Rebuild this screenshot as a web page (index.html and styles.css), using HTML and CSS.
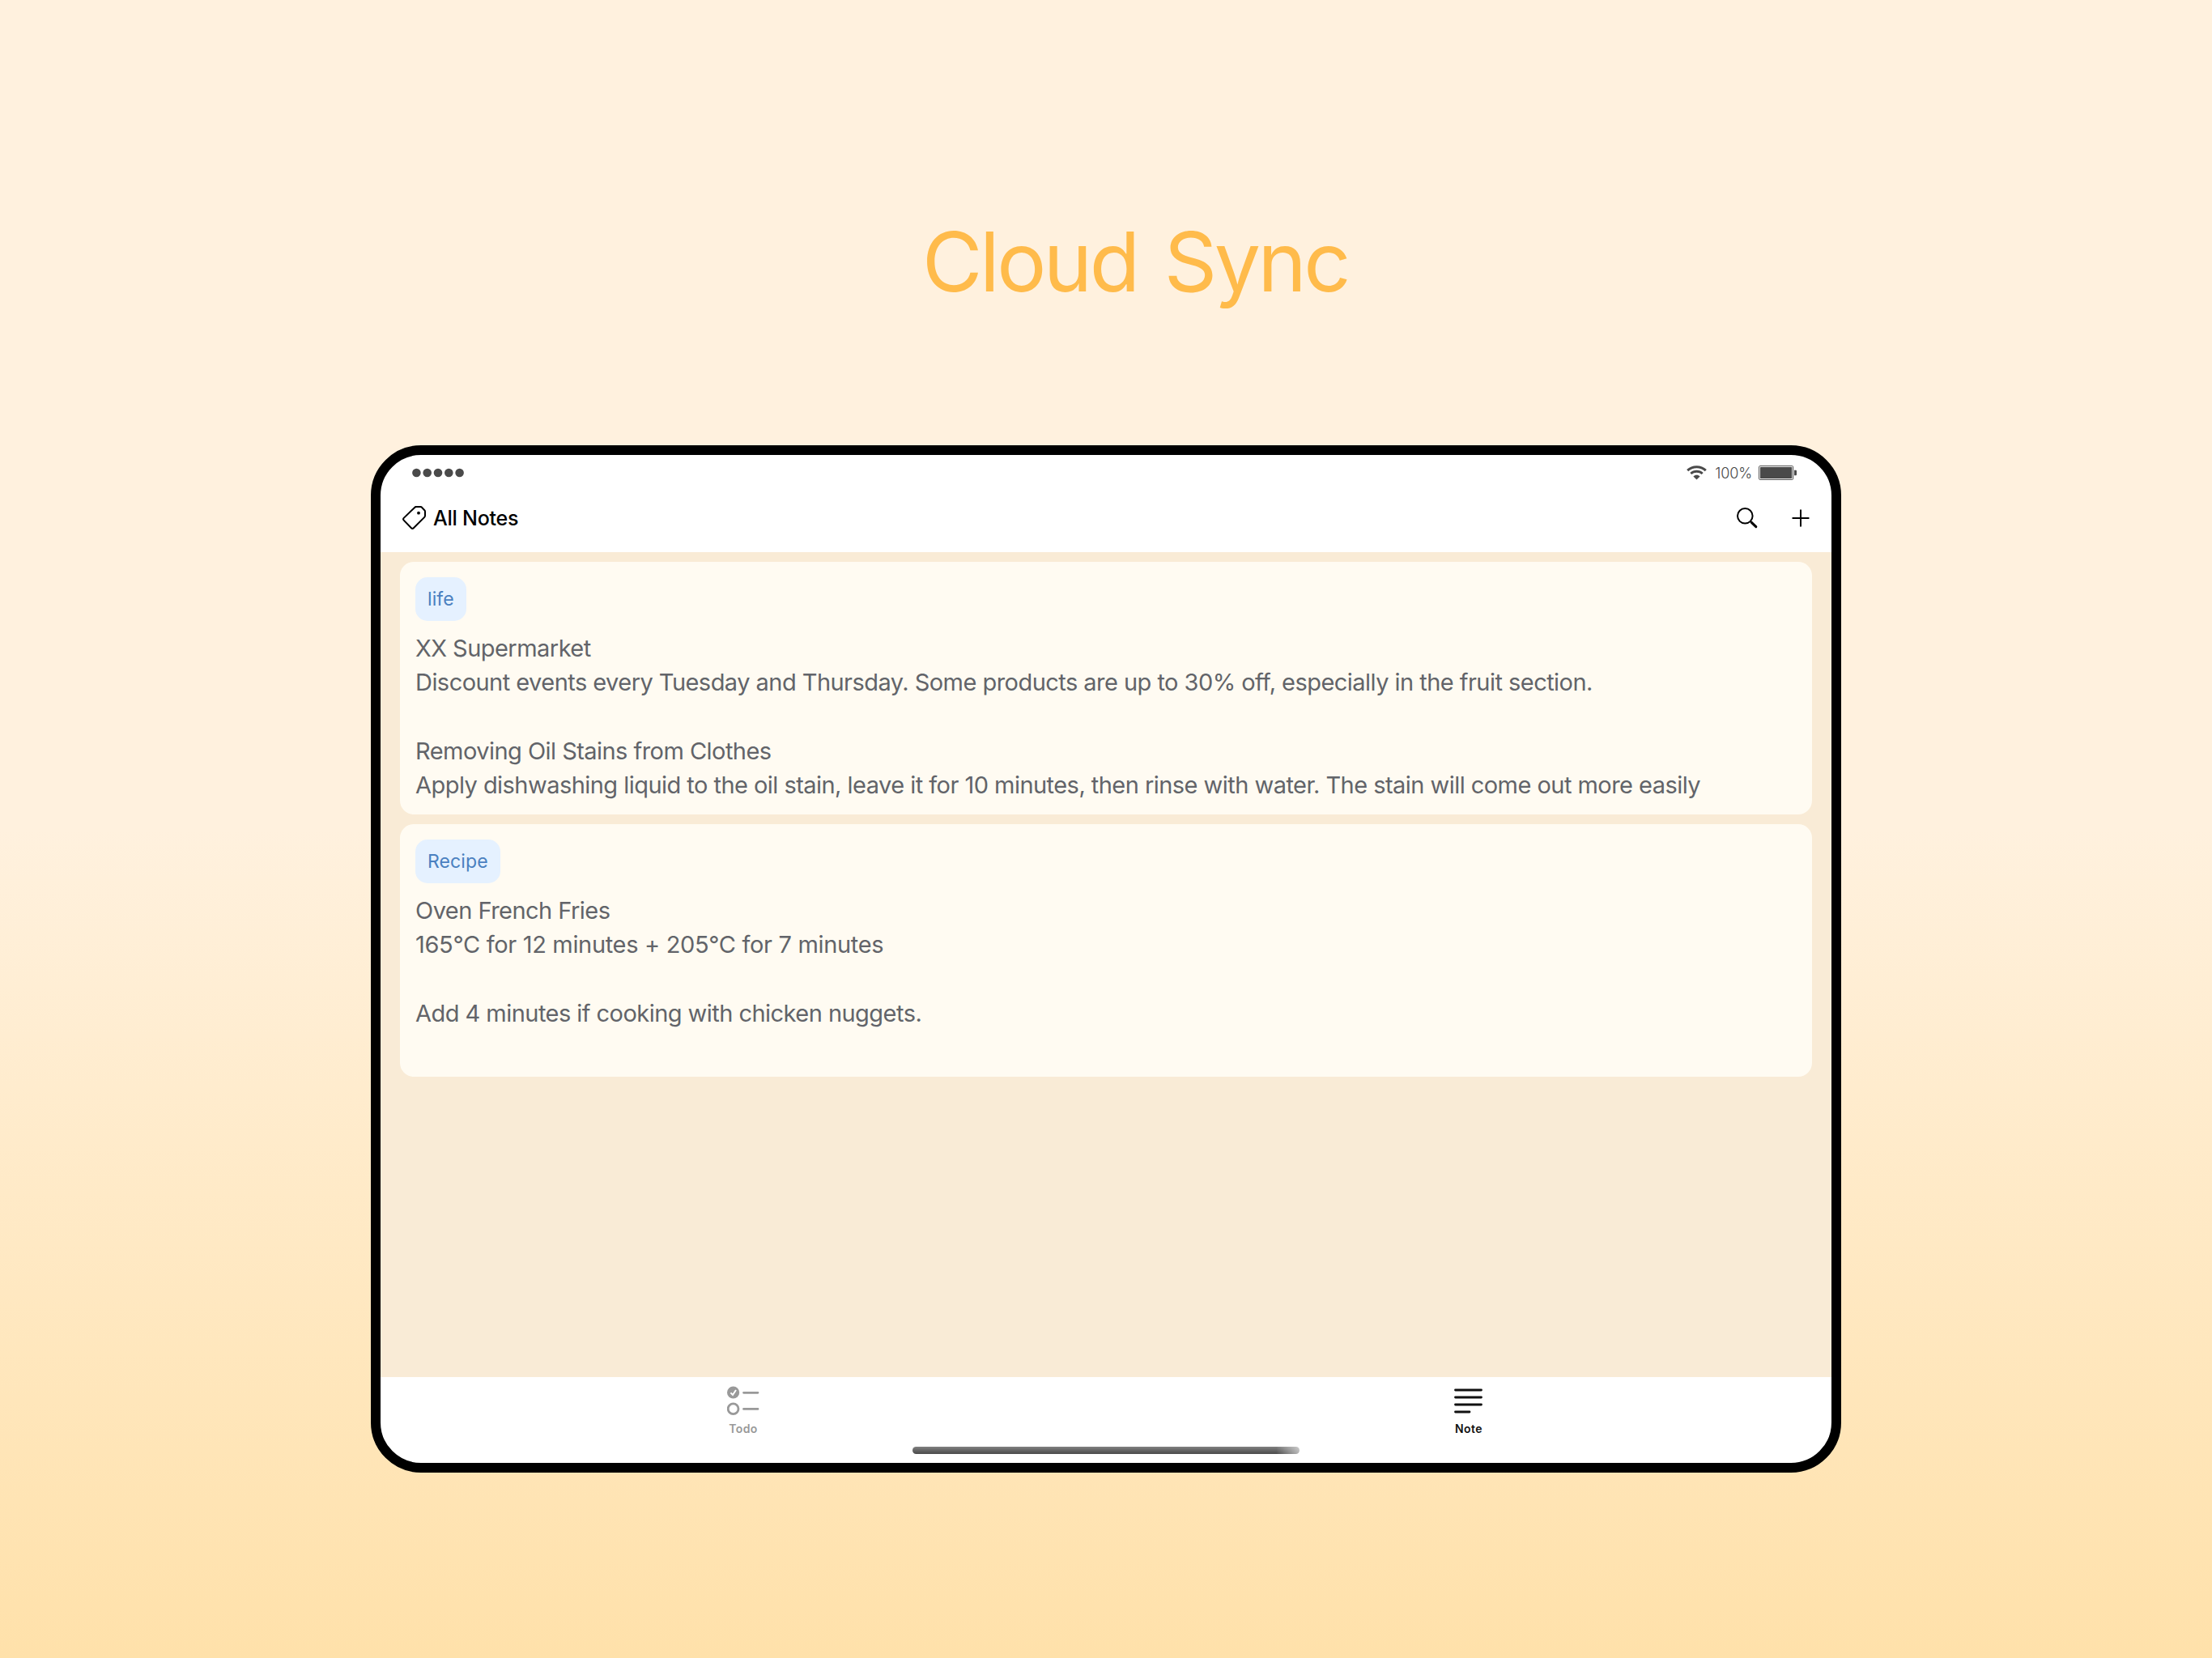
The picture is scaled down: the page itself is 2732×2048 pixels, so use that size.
FILE: index.html
```html
<!DOCTYPE html>
<html lang="en">

<head>
    <meta charset="UTF-8">
    <meta name="viewport" content="width=device-width, initial-scale=1.0">
    <title>Cloud Sync</title>
    <link rel="stylesheet" href="styles.css">
</head>

<body>
    <h1 class="title">Cloud Sync</h1>
    <div class="device">
        <div class="status-bar">
            <svg class="dots" width="64" height="12" viewBox="0 0 64 12">
                <circle cx="5.4" cy="6" r="5.3" />
                <circle cx="18.7" cy="6" r="5.3" />
                <circle cx="32" cy="6" r="5.3" />
                <circle cx="45.3" cy="6" r="5.3" />
                <circle cx="58.6" cy="6" r="5.3" />
            </svg>
            <div class="status-right">
                <svg class="wifi" width="25" height="18" viewBox="0 0 25 18">
                    <path d="M1.2 6.2C7.5 0.2 17.5 0.2 23.8 6.2" />
                    <path d="M5.3 10C9.3 6.4 15.7 6.4 19.7 10" />
                    <path class="fill" d="M8.4 13.4C10.6 11.2 14.4 11.2 16.6 13.4L12.5 17.4Z" />
                </svg>
                <span class="percent">100%</span>
                <svg class="battery" width="48" height="18" viewBox="0 0 48 18">
                    <rect class="shell" x="0.6" y="0.6" width="42" height="16.8" rx="1" />
                    <rect x="2" y="2" width="39.2" height="14" rx="0.6" />
                    <path d="M44 5.8H46Q47 5.8 47 7V11Q47 12.2 46 12.2H44Z" />
                </svg>
            </div>
        </div>
        <div class="header">
            <div class="folder">
                <svg width="30" height="30" viewBox="0 0 30 30">
                    <path d="M15.3 1.7Q16.2 0.9 17.4 0.9H22Q23 0.9 23.8 1.6L27.3 5.2Q28 5.9 28 7V12Q28 13 27.2 13.9L13.8 27.2Q12.4 28.6 11 27.2L1.7 17.6Q0.4 16.2 1.7 14.9Z" />
                    <circle cx="20" cy="8.7" r="1.9" />
                </svg>
                <span>All Notes</span>
            </div>
            <div class="actions">
                <svg width="26" height="26" viewBox="0 0 26 26">
                    <circle cx="10.3" cy="10.3" r="9.3" />
                    <path d="M17 17L18.5 18.5" />
                    <path class="handle" d="M18.3 18.3L23.8 23.6" />
                </svg>
                <svg width="22" height="22" viewBox="0 0 22 22">
                    <path d="M11 1.3V20.7M1.3 11H20.7" />
                </svg>
            </div>
        </div>
        <div class="notes">
            <div class="note">
                <span class="tag">life</span>
                <p>XX Supermarket</p>
                <p>Discount events every Tuesday and Thursday. Some products are up to 30% off, especially in the fruit section.</p>
                <p>&nbsp;</p>
                <p>Removing Oil Stains from Clothes</p>
                <p>Apply dishwashing liquid to the oil stain, leave it for 10 minutes, then rinse with water. The stain will come out more easily</p>
            </div>
            <div class="note">
                <span class="tag">Recipe</span>
                <p>Oven French Fries</p>
                <p class="numbers">165°C for 12 minutes + 205°C for 7 minutes</p>
                <p>&nbsp;</p>
                <p>Add 4 minutes if cooking with chicken nuggets.</p>
            </div>
        </div>
        <div class="tab-bar">
            <div class="tab">
                <svg width="40" height="36" viewBox="0 0 40 36">
                    <circle cx="7.6" cy="8" r="7.6" />
                    <path class="check" d="M4.4 8.4L7 11L11 5" />
                    <circle class="ring" cx="7.6" cy="28.2" r="6.4" />
                    <path class="line" d="M20.5 8.3H38M20.5 28.4H38" />
                </svg>
                <span>Todo</span>
            </div>
            <div class="tab active">
                <svg width="36" height="36" viewBox="0 0 36 36">
                    <path class="line" d="M1.5 5H33.5M1.5 14H33.5M1.5 23H33.5M1.5 32H19" />
                </svg>
                <span>Note</span>
            </div>
            <div class="home-bar"></div>
        </div>
    </div>
</body>

</html>
```
FILE: styles.css
```css
* {
    box-sizing: border-box;
}

body {
    margin: 0;
    height: 2048px;
    overflow: hidden;
    font-family: Inter, "Liberation Sans", sans-serif;
    background: linear-gradient(#fff1de 0%, #fff1de 50%, #ffe1aa 100%);
}

.title {
    margin: 0;
    height: 550px;
    padding: 259px 0 0 1139px;
    font-size: 102px;
    line-height: 128px;
    font-weight: 400;
    letter-spacing: -3.5px;
    word-spacing: 8px;
    color: #ffbb4b;
}

.device {
    display: flex;
    flex-direction: column;
    width: 1816px;
    height: 1269px;
    margin: 0 auto;
    border: 12px solid #000;
    border-radius: 62px;
    background: #fff;
    overflow: hidden;
}

.status-bar {
    display: flex;
    justify-content: space-between;
    align-items: center;
    height: 44px;
    padding: 0 42px 0 39px;
    color: #4a4a4a;
    fill: #4a4a4a;
}

.status-right {
    display: flex;
    align-items: center;
}

.wifi path {
    fill: none;
    stroke: #4a4a4a;
    stroke-width: 3;
}

.wifi .fill {
    fill: #4a4a4a;
    stroke: none;
}

.percent {
    margin: 0 8px 0 10px;
    font-size: 18px;
    font-weight: 350;
    letter-spacing: -0.1px;
}

.battery .shell {
    fill: none;
    stroke: #4a4a4a;
    stroke-width: 1;
}

.header {
    display: flex;
    justify-content: space-between;
    align-items: center;
    height: 76px;
    padding: 0 27px 8px;
}

.header svg {
    fill: none;
    stroke: #000;
    stroke-width: 2;
    stroke-linecap: round;
}

.folder {
    display: flex;
    align-items: center;
    gap: 8px;
    font-size: 25px;
    font-weight: 500;
    letter-spacing: -0.25px;
    color: #000;
}

.folder circle {
    fill: #000;
    stroke: none;
}

.actions {
    display: flex;
    align-items: center;
    gap: 42px;
}

.actions .handle {
    stroke-width: 3;
}

.notes {
    flex: 1;
    display: flex;
    flex-direction: column;
    gap: 12px;
    padding: 12px 24px;
    background: #f9ebd6;
}

.note {
    height: 312px;
    padding: 19px 19px 0;
    border-radius: 17px;
    background: #fffbf2;
    color: #626469;
    font-size: 29px;
    line-height: 42.2px;
    letter-spacing: -0.54px;
}

.note p {
    margin: 0;
    white-space: nowrap;
}

.note .numbers {
    letter-spacing: -0.33px;
}

.tag {
    display: block;
    width: fit-content;
    height: 54px;
    margin-bottom: 13px;
    padding: 0 15px;
    border-radius: 15px;
    background: #e5f1ff;
    color: #4a80c0;
    font-size: 23px;
    line-height: 54px;
    letter-spacing: 0.1px;
}

.tab-bar {
    position: relative;
    display: flex;
    height: 106px;
}

.tab {
    flex: 1;
    display: flex;
    flex-direction: column;
    align-items: center;
    padding-top: 11px;
    color: #999;
    font-size: 14px;
    font-weight: 600;
    letter-spacing: 0.4px;
}

.tab svg {
    fill: #999;
    margin-bottom: 8px;
}

.tab .line,
.tab .ring {
    fill: none;
    stroke: #999;
    stroke-width: 2.8;
    stroke-linecap: round;
}

.tab .check {
    fill: none;
    stroke: #fff;
    stroke-width: 2;
}

.tab.active {
    color: #111;
}

.tab.active .line {
    stroke: #111;
}

.home-bar {
    position: absolute;
    left: 657px;
    bottom: 11px;
    width: 478px;
    height: 9px;
    border-radius: 5px;
    background: linear-gradient(90deg, transparent 94%, #ffffff99), linear-gradient(#808080, #4a4a4a);
}
```
